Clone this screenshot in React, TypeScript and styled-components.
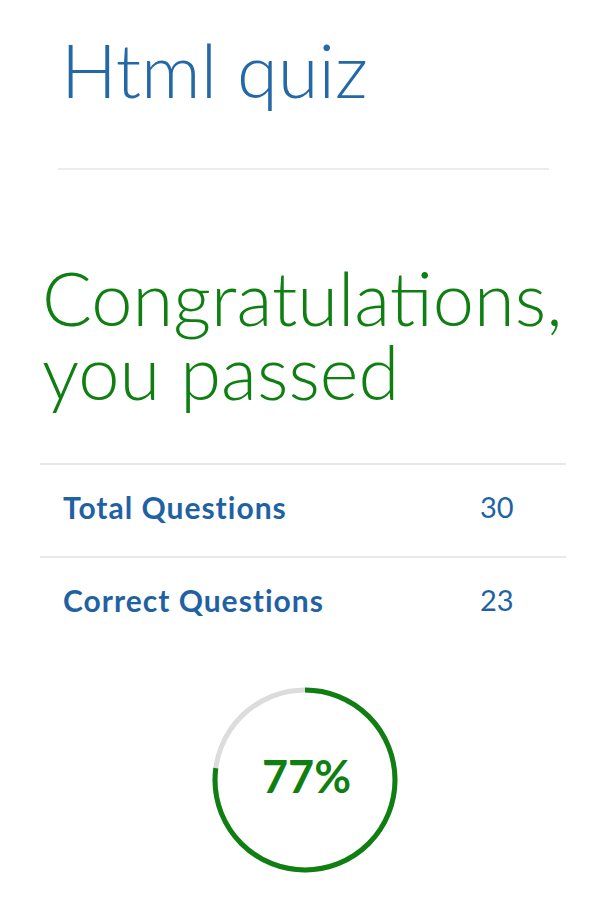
import React from "react";
import styled, { createGlobalStyle } from "styled-components";

const Global = createGlobalStyle`
  html, body { margin: 0; padding: 0; background: #ffffff; }
  body { font-family: Lato, "Open Sans", sans-serif; }
`;

const Page = styled.div`
  width: 606px;
  min-height: 918px;
  display: flex;
  flex-direction: column;
  background: #fff;
`;

const Header = styled.header`
  display: flex;
  flex-direction: column;
  padding: 20px 57px 0 58px;
`;

const Title = styled.h1`
  margin: 0 0 0 3px;
  font-family: Lato, sans-serif;
  font-weight: 300;
  font-size: 74px;
  line-height: 100px;
  color: #2468a8;
`;

const Divider = styled.hr<{ $top?: number }>`
  border: none;
  height: 2px;
  background: #ececec;
  margin: ${(p) => p.$top ?? 0}px 0 0 0;
  width: 100%;
`;

const Main = styled.main`
  display: flex;
  flex-direction: column;
  padding: 91px 40px 0 40px;
`;

const Result = styled.h2`
  margin: 0 0 0 2px;
  font-family: Lato, sans-serif;
  font-weight: 300;
  font-size: 74px;
  line-height: 74px;
  color: #0f7f12;
`;

const Table = styled.div`
  display: flex;
  flex-direction: column;
  margin-top: 54px;
`;

const Row = styled.div`
  display: flex;
  align-items: center;
  height: 93px;
  padding: 0 0 8px 23px;
  border-top: 2px solid #e8e8e8;
  box-sizing: border-box;
`;

const Label = styled.span`
  font-family: Lato, sans-serif;
  font-weight: 700;
  font-size: 30px;
  letter-spacing: 1px;
  color: #1f62a3;
  width: 417px;
`;

const Value = styled.span`
  font-family: Lato, sans-serif;
  font-weight: 400;
  font-size: 29px;
  color: #1f62a3;
`;

const Gauge = styled.div`
  position: relative;
  align-self: center;
  width: 190px;
  height: 190px;
  margin-top: 36px;
  margin-left: 3px;
`;

const GaugeText = styled.div`
  position: absolute;
  inset: 0;
  display: flex;
  align-items: center;
  justify-content: center;
  font-family: Lato, sans-serif;
  font-weight: 700;
  font-size: 45px;
  color: #0f7f12;
  padding: 0 0 8px 4px;
  box-sizing: border-box;
`;

function Ring({ percent }: { percent: number }) {
  const r = 90;
  const c = 2 * Math.PI * r;
  return (
    <svg width="190" height="190" viewBox="0 0 190 190">
      <circle cx="95" cy="95" r={r} fill="none" stroke="#dcdcdc" strokeWidth="5" />
      <circle
        cx="95"
        cy="95"
        r={r}
        fill="none"
        stroke="#0f7f12"
        strokeWidth="5"
        strokeDasharray={`${(c * percent) / 100} ${c}`}
        transform="rotate(-90 95 95)"
      />
    </svg>
  );
}

export default function App() {
  const total = 30;
  const correct = 23;
  const pct = Math.round((correct / total) * 100);
  return (
    <Page>
      <Global />
      <Header>
        <Title>Html quiz</Title>
        <Divider $top={48} />
      </Header>
      <Main>
        <Result>
          Congratulations,
          <br />
          you passed
        </Result>
        <Table>
          <Row>
            <Label>Total Questions</Label>
            <Value>{total}</Value>
          </Row>
          <Row>
            <Label>Correct Questions</Label>
            <Value>{correct}</Value>
          </Row>
        </Table>
        <Gauge>
          <Ring percent={pct} />
          <GaugeText>{pct}%</GaugeText>
        </Gauge>
      </Main>
    </Page>
  );
}
